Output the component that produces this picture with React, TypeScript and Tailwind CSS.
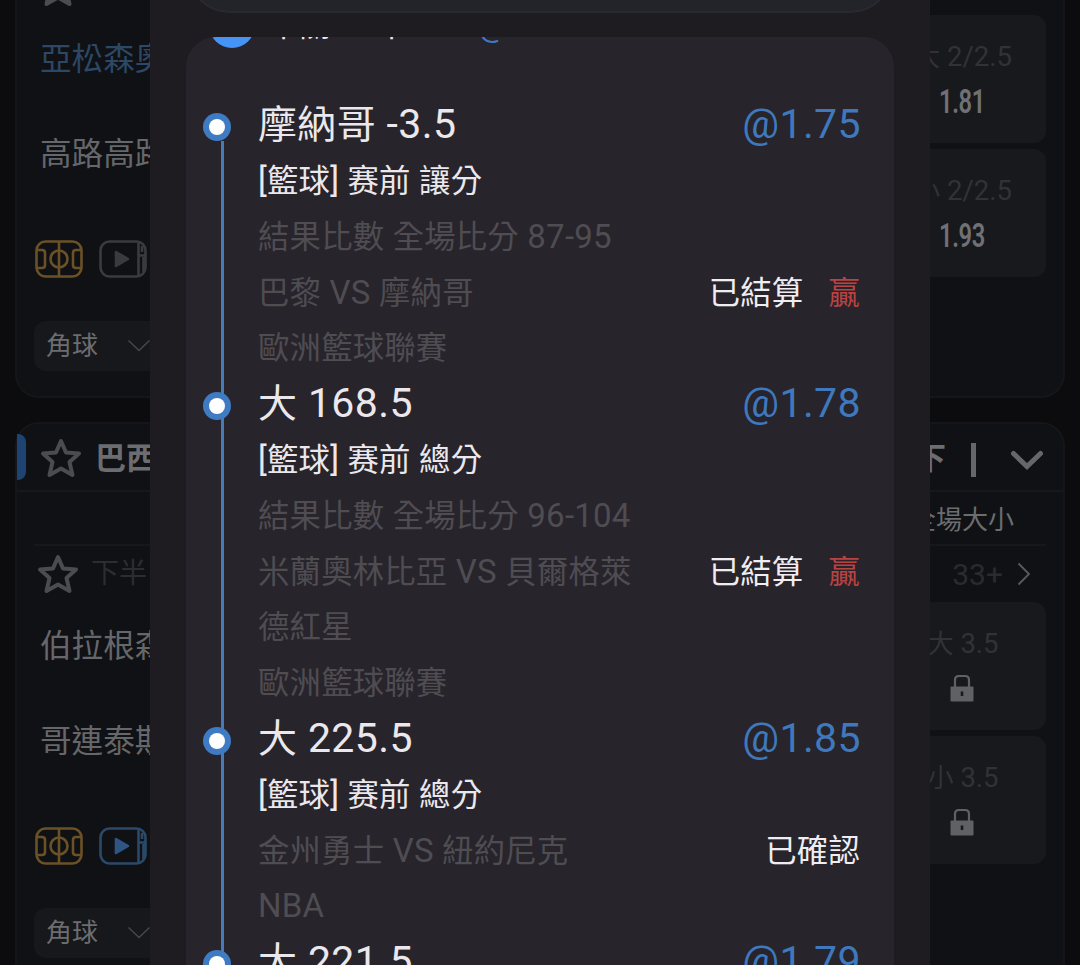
import { ReactNode } from "react";
import clsx from "clsx";

type Leg = {
  pick: string;
  odds: string;
  market: string;
  score?: string;
  teams: string[];
  league: string;
  status: string;
  result?: string;
};

const legs: Leg[] = [
  {
    pick: "摩納哥 -3.5",
    odds: "@1.75",
    market: "[籃球] 赛前 讓分",
    score: "結果比數 全場比分 87-95",
    teams: ["巴黎 VS 摩納哥"],
    league: "歐洲籃球聯賽",
    status: "已結算",
    result: "贏",
  },
  {
    pick: "大 168.5",
    odds: "@1.78",
    market: "[籃球] 赛前 總分",
    score: "結果比數 全場比分 96-104",
    teams: ["米蘭奧林比亞 VS 貝爾格萊", "德紅星"],
    league: "歐洲籃球聯賽",
    status: "已結算",
    result: "贏",
  },
  {
    pick: "大 225.5",
    odds: "@1.85",
    market: "[籃球] 赛前 總分",
    teams: ["金州勇士 VS 紐約尼克"],
    league: "NBA",
    status: "已確認",
  },
];

// Chinese glyphs run slightly smaller than the latin ones next to them
function Mixed({ children }: { children: string }) {
  return (
    <>
      {children.split(/([\u4e00-\u9fff]+)/).map((part, i) =>
        i % 2 ? (
          <span key={i} className="text-[0.95em]">{part}</span>
        ) : (
          part
        )
      )}
    </>
  );
}

function Star({ className }: { className?: string }) {
  return (
    <svg viewBox="0 0 42 40" className={clsx("h-[40px] w-[42px] shrink-0", className)} fill="none" stroke="#4b4c4f" strokeWidth="4" strokeLinejoin="round">
      <path d="M21 3 26 14.5 39 15.5 29.5 24 32.5 37 21 30.500 9.500 37 12.500 24 3 15.500 16 14.500Z" />
    </svg>
  );
}

function PitchIcon() {
  return (
    <svg viewBox="0 0 48 38" className="h-[38px] w-[48px]" fill="none" stroke="#6b5226" strokeWidth="2.600">
      <rect x="1.500" y="1.500" width="45" height="35" rx="9" />
      <path d="M24 1.500V36.500M2 10H7Q10 10 10 13V25Q10 28 7 28H2M46 10H41Q38 10 38 13V25Q38 28 41 28H46" />
      <circle cx="24" cy="19" r="8.500" />
    </svg>
  );
}

function VideoIcon({ live }: { live?: boolean }) {
  const color = live ? "#2b4968" : "#3a3b3e";
  return (
    <svg viewBox="0 0 48 38" className="h-[38px] w-[48px]" fill="none" stroke={color} strokeWidth="2.600">
      <rect x="1.500" y="1.500" width="45" height="35" rx="9" />
      <path d="M39.500 2V36M40 15.500H46M43 6V12M44.500 17V32" />
      <path d="M17 12 29 19 17 26Z" fill={live ? "#2f5583" : color} stroke={live ? "#2f5583" : color} strokeLinejoin="round" />
    </svg>
  );
}

function Lock() {
  return (
    <svg viewBox="0 0 24 28" className="mt-[4px] h-[28px] w-[24px]">
      <path d="M5 14V6Q5 2 9 2H15Q19 2 19 6V14" fill="none" stroke="#606164" strokeWidth="2.200" />
      <rect x="0.500" y="12.500" width="23" height="15" rx="1" fill="#606164" />
      <path d="M12 17.500V22" stroke="#18191d" strokeWidth="2.600" />
    </svg>
  );
}

function Cell({ label, children }: { label: string; children: ReactNode }) {
  return (
    <div className="flex h-[128px] w-[168px] flex-col items-center rounded-xl bg-[#18191d] pt-[23.500px]">
      <div className="ml-[2px] h-9 text-[27.500px] leading-9 text-[#313236]"><Mixed>{label}</Mixed></div>
      <div className="flex h-12 items-center">{children}</div>
    </div>
  );
}

function Odds({ children }: { children: string }) {
  return <span className="mt-[7px] scale-x-[0.72] text-[33px] font-semibold tracking-[-0.5px] text-[#707174]">{children}</span>;
}

function MatchSide({ home, away, favorite, live }: { home: string; away: string; favorite?: boolean; live?: boolean }) {
  return (
    <div className="flex flex-col text-[31.600px]">
      <div className={clsx("mt-[2px] ml-[23px] h-[48px] leading-[48px] whitespace-nowrap", favorite ? "text-[#2c4865]" : "text-[#66676a]")}>{home}</div>
      <div className="mt-[47px] ml-[23px] h-[48px] leading-[48px] whitespace-nowrap text-[#66676a]">{away}</div>
      <div className="mt-[61px] ml-[18px] flex gap-4">
        <PitchIcon />
        <VideoIcon live={live} />
      </div>
      <div className="mt-[43px] ml-[17px] flex h-[50px] w-[150px] items-center rounded-xl bg-[#17181b] pl-3 text-[26px] text-[#6c6d70]">
        角球
        <svg viewBox="0 0 24 14" className="ml-[29px] h-[14px] w-[24px]" fill="none" stroke="#46474a" strokeWidth="1.500">
          <path d="M1.500 1.500 12 11.500 22.500 1.500" />
        </svg>
      </div>
    </div>
  );
}

function Pick({ pick, odds }: { pick: string; odds: string }) {
  return (
    <div className="flex h-[55.8px] items-center justify-between text-[41px] tracking-[0.4px] whitespace-nowrap text-[#ebe8ed]">
      <span><Mixed>{pick}</Mixed></span>
      <span className="text-[#3f78bd]">{odds}</span>
    </div>
  );
}

function Dot() {
  return (
    <div className="absolute top-[16px] left-[17px] flex size-[28px] items-center justify-center rounded-full bg-[#3f7bc2]">
      <div className="size-4 rounded-full bg-white" />
    </div>
  );
}

function LegRow({ leg }: { leg: Leg }) {
  const line = "flex h-[55.8px] items-center justify-between text-[33px] tracking-[0.22px] whitespace-nowrap";
  return (
    <div className="relative pr-[33px] pl-[72px]">
      <Dot />
      <Pick pick={leg.pick} odds={leg.odds} />
      <div className={clsx(line, "text-[#ebe8ed]")}>
        <span><Mixed>{leg.market}</Mixed></span>
      </div>
      {leg.score && <div className={clsx(line, "text-[#4f4c52]")}><span><Mixed>{leg.score}</Mixed></span></div>}
      {leg.teams.map((team, i) => (
        <div key={team} className={clsx(line, "text-[#4f4c52]")}>
          <span><Mixed>{team}</Mixed></span>
          {i === 0 && (
            <span className="mr-[1px] flex gap-[25px] text-[#f0edf2]">
              <span><Mixed>{leg.status}</Mixed></span>
              {leg.result && <span className="text-[#b84343]"><Mixed>{leg.result}</Mixed></span>}
            </span>
          )}
        </div>
      ))}
      <div className={clsx(line, "text-[#4f4c52]")}><span><Mixed>{leg.league}</Mixed></span></div>
    </div>
  );
}

export default function App() {
  return (
    <div className="relative h-[965px] w-[1080px] overflow-hidden bg-[#0c0c0e] font-['Roboto','Noto_Sans_CJK_TC',sans-serif]">
      {/* match list behind the dialog */}
      <div className="flex flex-col gap-[24px] px-[15px]">
        <section className="flex h-[398px] justify-between overflow-hidden rounded-b-[24px] border-2 border-t-0 border-[#15161a] bg-[#101115] pr-[17px]">
          <div>
            <div className="ml-[20px] flex h-[34px] items-start">
              <Star className="-mt-[33px]" />
            </div>
            <MatchSide home="亞松森奧" away="高路高路" favorite />
          </div>
          <div className="flex flex-col gap-[6px] pt-[15px]">
            <Cell label="大 2/2.5"><Odds>1.81</Odds></Cell>
            <Cell label="小 2/2.5"><Odds>1.93</Odds></Cell>
          </div>
        </section>

        <section className="h-[620px] rounded-t-[24px] border-2 border-[#15161a] bg-[#101115]">
          <div className="flex h-[68px] items-center justify-between border-b-2 border-[#17181b] pr-[19px]">
            <div className="flex items-center">
              <div className="h-[46px] w-[9px] rounded-r-lg bg-[#1d4472]" />
              <Star className="mt-[2px] ml-[14px]" />
              <span className="mt-[5px] ml-[13px] text-[31px] font-bold text-[#6c6d70]">巴西</span>
            </div>
            <div className="flex items-center pt-[5px] text-[31px] font-bold text-[#6c6d70]">
              <span>下</span>
              <div className="ml-[25px] h-[34px] w-[5px] bg-[#66676a]" />
              <svg viewBox="0 0 34 22" className="ml-[34px] h-[22px] w-[34px]" fill="none" stroke="#66676a" strokeWidth="5" strokeLinecap="round">
                <path d="M3.500 4.500 17 17.500 30.500 4.500" />
              </svg>
            </div>
          </div>
          <div className="mx-[17px] flex h-[54px] items-center justify-end border-b-2 border-[#17181b] pt-[5px] pr-[32px] text-[26px] text-[#6c6d70]">
            全場大小
          </div>
          <div className="flex h-[56px] items-center justify-between pr-[32px] pl-[20px]">
            <div className="flex items-center text-[28px] text-[#2c2d30]">
              <Star />
              <span className="ml-[12px]">下半</span>
            </div>
            <div className="flex items-center text-[30px] text-[#2a2b2f]">
              33+
              <svg viewBox="0 0 14 24" className="ml-[14px] h-[24px] w-[14px]" fill="none" stroke="#5a5b5e" strokeWidth="1.800">
                <path d="M1.500 1.500 12 12 1.500 22.500" />
              </svg>
            </div>
          </div>
          <div className="flex justify-between pr-[17px]">
            <div className="pt-[19px]">
              <MatchSide home="伯拉根森" away="哥連泰斯" live />
            </div>
            <div className="flex flex-col gap-[6px]">
              <Cell label="大 3.5"><Lock /></Cell>
              <Cell label="小 3.5"><Lock /></Cell>
            </div>
          </div>
        </section>
      </div>

      {/* bet slip dialog */}
      <div className="absolute inset-y-0 left-[150px] flex w-[780px] flex-col bg-[#1e1b21] px-[36px]">
        <div className="h-[13px] shrink-0 overflow-hidden">
          <div className="-mt-[87px] h-[100px] rounded-[44px] border-2 border-[#282a2f] bg-[#222429]" />
        </div>
        <div className="mt-[24px] h-[928px] overflow-hidden rounded-t-[30px] bg-[#27242b]">
          <div className="relative h-[60px]">
            <div className="absolute -top-[35px] left-[23px] size-[46px] rounded-full bg-[#4593f5]" />
            <div className="absolute -top-[32.5px] left-[82px] flex text-[33px] leading-[40px] whitespace-nowrap text-[#ebe8ed]">
              <span className="w-[210px]"><Mixed>串關 10串1</Mixed></span>
              <span className="text-[#3f78bd]">@</span>
            </div>
          </div>
          <div className="relative">
            <div className="absolute top-[44px] bottom-0 left-[35px] w-[3px] bg-[#477bb8]" />
            {legs.map((leg) => (
              <LegRow key={leg.pick} leg={leg} />
            ))}
            <div className="relative pr-[33px] pl-[72px]">
              <Dot />
              <Pick pick="大 221.5" odds="@1.79" />
            </div>
          </div>
        </div>
      </div>
    </div>
  );
}
